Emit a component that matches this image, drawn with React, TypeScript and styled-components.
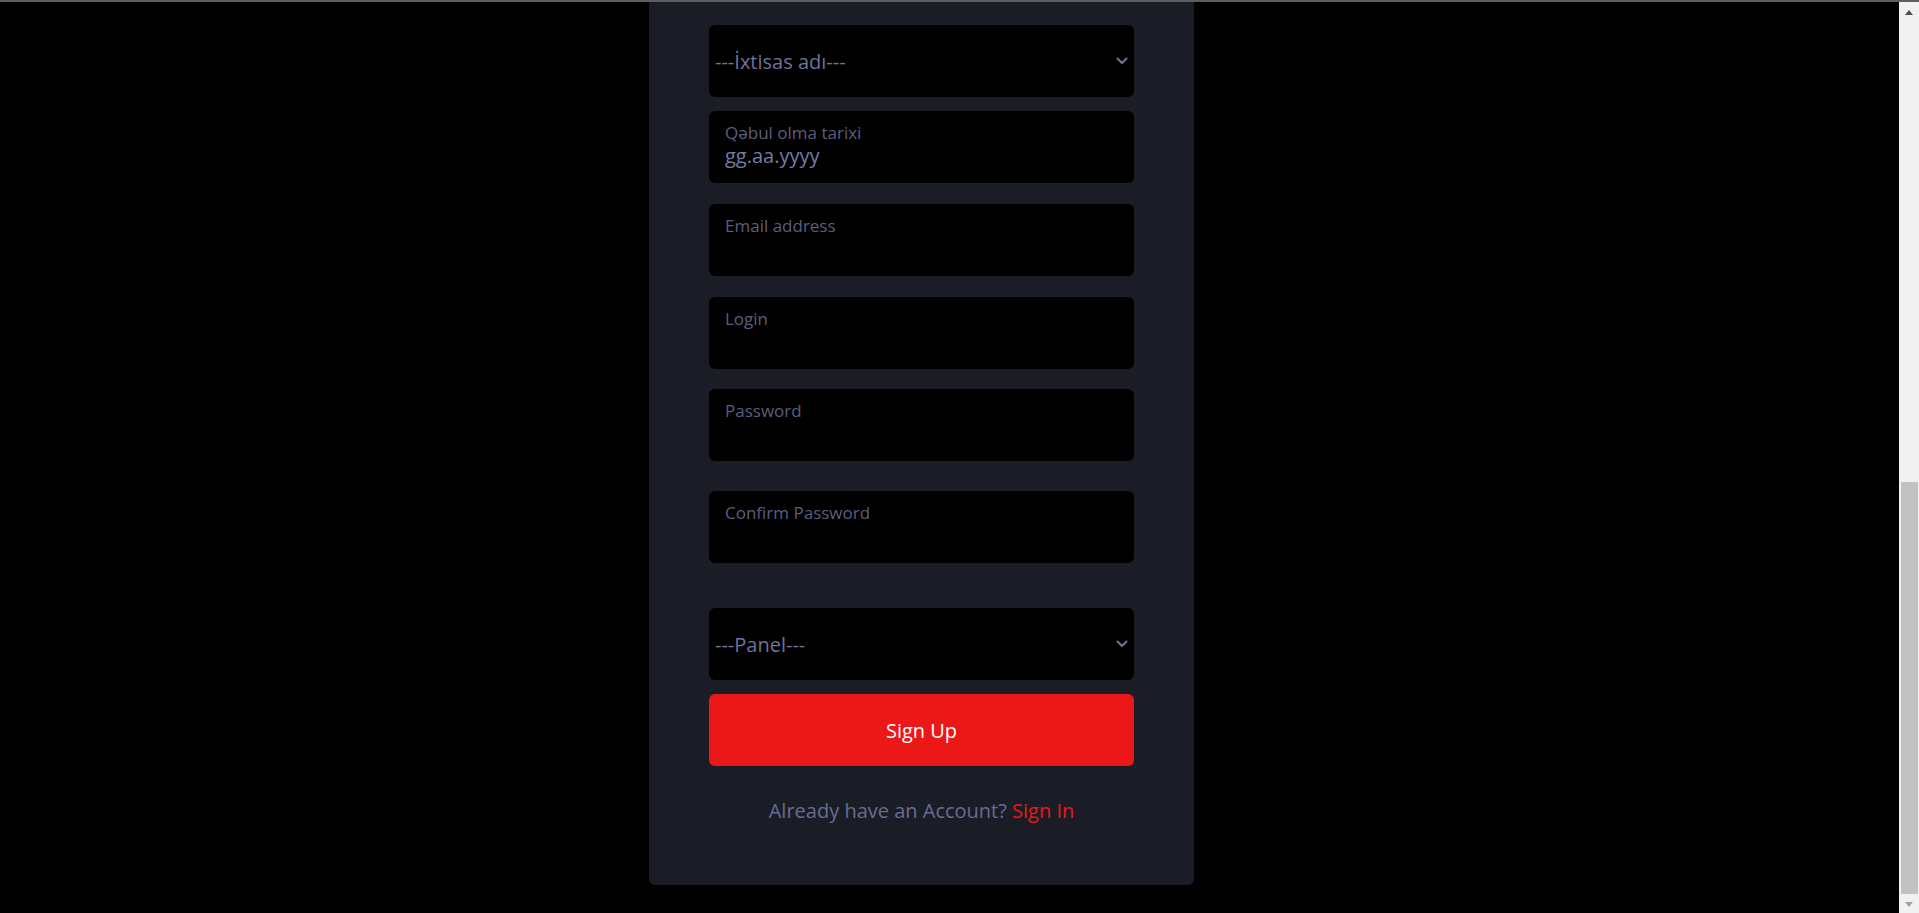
import React from "react";
import styled, { createGlobalStyle } from "styled-components";

/* Sign up form - bottom part of the registration card */

const GlobalStyle = createGlobalStyle`
  html {
    background: #000;
  }
  body {
    margin: 0;
    background: #000;
    border-top: 2px solid #5e5e5e;
    font-family: "Open Sans", "Noto Sans", sans-serif;
    overflow: hidden;
  }
`;

const Page = styled.div`
  display: flex;
  height: calc(100vh - 2px);
`;

const Main = styled.main`
  flex: 1;
  display: flex;
  align-items: flex-start;
`;

// card sits a bit left of centre, like the col offset in the original
const Card = styled.section`
  margin-left: 649px;
  width: 545px;
  box-sizing: border-box;
  background: #1b1d26;
  border-radius: 0 0 6px 6px;
  padding: 23px 60px 61px;
  display: flex;
  flex-direction: column;
`;

const Form = styled.form`
  display: flex;
  flex-direction: column;
  margin: 0;
`;

const SelectBox = styled.div<{ $mt?: number }>`
  display: flex;
  align-items: center;
  height: 72px;
  margin-top: ${(p) => p.$mt ?? 0}px;
  background: #000;
  border-radius: 6px;
  padding-right: 6px;
  box-sizing: border-box;
`;

const Select = styled.select`
  appearance: none;
  flex: 1;
  height: 100%;
  background: transparent;
  border: none;
  outline: none;
  color: #6f7399;
  font-family: "Open Sans", "Noto Sans", sans-serif;
  font-size: 20px;
  padding: 0 0 0 6px;
  margin: 0;
`;

const Chevron = () => (
  <svg width="12" height="8" viewBox="0 0 12 8" fill="none">
    <polyline
      points="1.5,1.5 6,6 10.5,1.5"
      stroke="#6f7399"
      strokeWidth="2"
      strokeLinecap="round"
      strokeLinejoin="round"
    />
  </svg>
);

const Field = styled.label<{ $mt?: number }>`
  display: flex;
  flex-direction: column;
  height: 72px;
  margin-top: ${(p) => p.$mt ?? 0}px;
  background: #000;
  border-radius: 6px;
  padding: 11px 16px 0;
  box-sizing: border-box;
`;

const FieldLabel = styled.span`
  font-size: 17px;
  line-height: 21px;
  color: #5b5e7c;
`;

const Input = styled.input`
  background: transparent;
  border: none;
  outline: none;
  padding: 0;
  margin: 0;
  height: 26px;
  font-family: "Open Sans", "Noto Sans", sans-serif;
  font-size: 20px;
  line-height: 26px;
  color: #767ba3;

  &::placeholder {
    color: #767ba3;
  }
`;

const SubmitButton = styled.button`
  height: 72px;
  margin-top: 14px;
  border: none;
  border-radius: 6px;
  background: #ec1717;
  color: #fff;
  font-family: "Open Sans", "Noto Sans", sans-serif;
  font-size: 20px;
  cursor: pointer;
`;

const Footer = styled.p`
  margin: 31px 0 0;
  text-align: center;
  font-size: 20px;
  line-height: 27px;
  color: #686c92;
`;

const SignInLink = styled.a`
  color: #ec1717;
  text-decoration: none;
`;

/* window scrollbar, scrolled to the bottom */
const Rail = styled.div`
  width: 20px;
  flex-shrink: 0;
  background: #f1f1f1;
  display: flex;
  flex-direction: column;
  align-items: center;
  padding: 8px 0 6px;
  box-sizing: border-box;
`;

const Arrow = styled.span<{ $down?: boolean }>`
  width: 0;
  height: 0;
  border-left: 4.5px solid transparent;
  border-right: 4.5px solid transparent;
  ${(p) =>
    p.$down
      ? "border-top: 5px solid #a3a3a3; margin-top: 8px;"
      : "border-bottom: 5px solid #505050;"}
`;

const Thumb = styled.div`
  align-self: stretch;
  margin: auto 1px 0 2px;
  height: 412px;
  background: #c1c1c1;
`;

export default function App() {
  return (
    <>
      <GlobalStyle />
      <Page>
        <Main>
          <Card>
            <Form onSubmit={(e) => e.preventDefault()}>
              <SelectBox>
                <Select defaultValue="">
                  <option value="">---İxtisas adı---</option>
                </Select>
                <Chevron />
              </SelectBox>

              <Field $mt={14}>
                <FieldLabel>Qəbul olma tarixi</FieldLabel>
                <Input type="text" placeholder="gg.aa.yyyy" />
              </Field>

              <Field $mt={21}>
                <FieldLabel>Email address</FieldLabel>
                <Input type="email" />
              </Field>

              <Field $mt={21}>
                <FieldLabel>Login</FieldLabel>
                <Input type="text" />
              </Field>

              <Field $mt={20}>
                <FieldLabel>Password</FieldLabel>
                <Input type="password" />
              </Field>

              <Field $mt={30}>
                <FieldLabel>Confirm Password</FieldLabel>
                <Input type="password" />
              </Field>

              <SelectBox $mt={45}>
                <Select defaultValue="">
                  <option value="">---Panel---</option>
                </Select>
                <Chevron />
              </SelectBox>

              <SubmitButton type="submit">Sign Up</SubmitButton>
            </Form>

            <Footer>
              Already have an Account? <SignInLink href="#">Sign In</SignInLink>
            </Footer>
          </Card>
        </Main>
        <Rail>
          <Arrow />
          <Thumb />
          <Arrow $down />
        </Rail>
      </Page>
    </>
  );
}
